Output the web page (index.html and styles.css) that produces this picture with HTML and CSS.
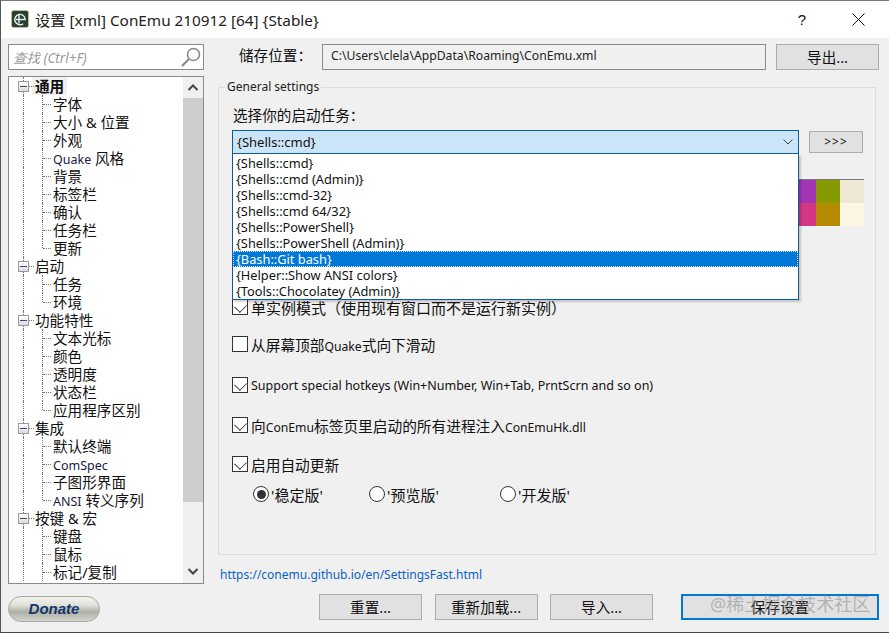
FILE: index.html
```html
<!DOCTYPE html>
<html lang="zh-CN">
<head>
<meta charset="utf-8">
<title>设置</title>
<link rel="stylesheet" href="styles.css">
</head>
<body>
<div class="window">
  <header class="titlebar">
    <svg class="app-icon" width="18" height="18" viewBox="0 0 18 18"><rect x="0.5" y="0.5" width="17" height="17" rx="2" fill="#26403a" stroke="#d8cc80" stroke-opacity=".7"/><path d="M5 9.5h9.2a5.2 5.2 0 1 0-2 4.2" fill="none" stroke="#e9efe4" stroke-width="1.4"/><path d="M8 4.5v9" fill="none" stroke="#e9efe4" stroke-width="1.4"/></svg>
    <span class="title-text">设置 [xml] ConEmu 210912 [64] {Stable}</span>
    <span class="help">?</span>
    <svg class="close" width="13" height="13" viewBox="0 0 13 13"><path d="M.5.5l12 12M12.5.5l-12 12" stroke="#111" stroke-width="1" fill="none"/></svg>
  </header>

  <div class="body">
    <aside class="left">
      <div class="search">
        <span class="search-text">查找 (Ctrl+F)</span>
        <svg width="22" height="22" viewBox="0 0 22 22"><circle cx="13.5" cy="8.5" r="6" fill="#fff" stroke="#8a8a8a" stroke-width="1.6"/><path d="M9 13l-7 7" stroke="#8a8a8a" stroke-width="2.2"/></svg>
      </div>
      <div class="tree">
        <ul class="tree-list">
          <li class="node parent"><i class="box"></i><b class="sel">通用</b></li>
          <li class="node child"><i class="tick"></i>字体</li>
          <li class="node child"><i class="tick"></i>大小 &amp; 位置</li>
          <li class="node child"><i class="tick"></i>外观</li>
          <li class="node child"><i class="tick"></i><span class="lat">Quake</span> 风格</li>
          <li class="node child"><i class="tick"></i>背景</li>
          <li class="node child"><i class="tick"></i>标签栏</li>
          <li class="node child"><i class="tick"></i>确认</li>
          <li class="node child"><i class="tick"></i>任务栏</li>
          <li class="node child last"><i class="tick"></i>更新</li>
          <li class="node parent"><i class="box"></i>启动</li>
          <li class="node child"><i class="tick"></i>任务</li>
          <li class="node child last"><i class="tick"></i>环境</li>
          <li class="node parent"><i class="box"></i>功能特性</li>
          <li class="node child"><i class="tick"></i>文本光标</li>
          <li class="node child"><i class="tick"></i>颜色</li>
          <li class="node child"><i class="tick"></i>透明度</li>
          <li class="node child"><i class="tick"></i>状态栏</li>
          <li class="node child last"><i class="tick"></i>应用程序区别</li>
          <li class="node parent"><i class="box"></i>集成</li>
          <li class="node child"><i class="tick"></i>默认终端</li>
          <li class="node child"><i class="tick"></i><span class="lat">ComSpec</span></li>
          <li class="node child"><i class="tick"></i>子图形界面</li>
          <li class="node child last"><i class="tick"></i><span class="lat">ANSI</span> 转义序列</li>
          <li class="node parent"><i class="box"></i>按键 &amp; 宏</li>
          <li class="node child"><i class="tick"></i>键盘</li>
          <li class="node child"><i class="tick"></i>鼠标</li>
          <li class="node child"><i class="tick"></i>标记/复制</li>
        </ul>
        <div class="scrollbar">
          <svg class="arrow" width="20" height="21" viewBox="0 0 20 21"><path d="M5.5 13l4.5-4.5 4.5 4.5" fill="none" stroke="#444" stroke-width="2"/></svg>
          <div class="thumb"></div>
          <svg class="arrow down" width="20" height="21" viewBox="0 0 20 21"><path d="M5.5 8l4.5 4.5 4.5-4.5" fill="none" stroke="#444" stroke-width="2"/></svg>
        </div>
      </div>
      <div class="donate">Donate</div>
    </aside>

    <main class="right">
      <div class="store-row">
        <span class="store-label">储存位置：</span>
        <div class="store-path">C:\Users\clela\AppData\Roaming\ConEmu.xml</div>
        <button class="btn export">导出...</button>
      </div>

      <section class="group">
        <span class="legend">General settings</span>
        <div class="pick-label">选择你的启动任务：</div>
        <div class="combo-row">
          <div class="combo">
            <span>{Shells::cmd}</span>
            <svg width="10" height="6" viewBox="0 0 10 6"><path d="M.5.5L5 5 9.5.5" fill="none" stroke="#444" stroke-width="1"/></svg>
          </div>
          <button class="btn more">&gt;&gt;&gt;</button>
          <ul class="dropdown">
            <li>{Shells::cmd}</li>
            <li>{Shells::cmd (Admin)}</li>
            <li>{Shells::cmd-32}</li>
            <li>{Shells::cmd 64/32}</li>
            <li>{Shells::PowerShell}</li>
            <li>{Shells::PowerShell (Admin)}</li>
            <li class="active">{Bash::Git bash}</li>
            <li>{Helper::Show ANSI colors}</li>
            <li>{Tools::Chocolatey (Admin)}</li>
          </ul>
        </div>
        <div class="palette">
          <i class="c1"></i><i class="c2"></i><i class="c3"></i>
          <i class="c4"></i><i class="c5"></i><i class="c6"></i>
        </div>

        <label class="check r1"><i class="cb on"></i><span>单实例模式（使用现有窗口而不是运行新实例）</span></label>
        <label class="check r2"><i class="cb"></i><span>从屏幕顶部<small>Quake</small>式向下滑动</span></label>
        <label class="check r3"><i class="cb on"></i><span class="en">Support special hotkeys (Win+Number, Win+Tab, PrntScrn and so on)</span></label>
        <label class="check r4"><i class="cb on"></i><span>向<small>ConEmu</small>标签页里启动的所有进程注入<small>ConEmuHk.dll</small></span></label>
        <label class="check r5"><i class="cb on"></i><span>启用自动更新</span></label>
        <div class="radios">
          <label class="radio w1"><i class="rb on"></i><span>'稳定版'</span></label>
          <label class="radio w2"><i class="rb"></i><span>'预览版'</span></label>
          <label class="radio"><i class="rb"></i><span>'开发版'</span></label>
        </div>
      </section>

      <a class="link">https://conemu.github.io/en/SettingsFast.html</a>

      <div class="actions">
        <button class="btn act">重置...</button>
        <button class="btn act">重新加载...</button>
        <button class="btn act">导入...</button>
        <button class="btn act primary">保存设置</button>
      </div>
    </main>
  </div>
  <span class="watermark">@稀土掘金技术社区</span>
</div>
</body>
</html>
```
FILE: styles.css
```css
* { box-sizing: border-box; }
html, body { margin: 0; padding: 0; }
body {
  width: 889px; height: 633px; overflow: hidden; background: #f0f0f0;
  font-family: "Noto Sans", "Noto Sans CJK SC", sans-serif; color: #111;
  text-spacing-trim: space-all; font-feature-settings: "chws" 0;
}
ul { list-style: none; margin: 0; padding: 0; }
i { display: block; font-style: normal; }
.window { position: relative; width: 889px; height: 633px; border-bottom: 1px solid #444; border-left: 1px solid #555; border-top: 1px solid #777; }

.titlebar { height: 37px; background: #fff; display: flex; align-items: center; padding-left: 10px; padding-right: 24px; padding-bottom: 1px; }
.app-icon { flex: none; }
.title-text { margin-left: 6px; font-size: 15.3px; white-space: nowrap; color: #222; flex: 1; }
.help { font-size: 15px; margin-right: 46px; font-family: "Liberation Sans", sans-serif; }
.close { margin-top: 1px; }

.body { display: flex; height: 594px; }
.left { width: 217px; flex: none; padding: 6px 0 0 7px; display: flex; flex-direction: column; }
.search { width: 196px; height: 26px; background: #fff; border: 1px solid #8a8a8a; display: flex; align-items: center; justify-content: space-between; padding: 0 1px 0 4px; }
.search-text { font-size: 13.5px; font-style: italic; color: #9a9a9a; }

.tree { width: 196px; height: 508px; margin-top: 6px; background: #fff; border: 1px solid #8a8a8a; display: flex; overflow: hidden; }
.tree-list { flex: 1; }
.node { height: 18px; line-height: 18px; font-size: 14.6px; white-space: nowrap; position: relative; }
.node::before { content: ""; position: absolute; left: 14px; top: 0; bottom: 0; border-left: 1px dotted #777; }
.parent { padding-left: 26px; }
.child { padding-left: 44px; }
.child::after { content: ""; position: absolute; left: 33px; top: 0; bottom: 0; border-left: 1px dotted #777; }
.child.last::after { bottom: 9px; }
.tick { position: absolute; left: 34px; top: 9px; width: 8px; border-top: 1px dotted #777; }
.box { position: absolute; left: 9px; top: 4px; width: 11px; height: 11px; border: 1px solid #9a9a9a; background: linear-gradient(#fff, #dcdcdc); z-index: 1; }
.box::after { content: ""; position: absolute; left: 1px; right: 1px; top: 4px; border-top: 1px solid #44447a; }
.parent::after { content: ""; position: absolute; left: 20px; width: 5px; top: 9px; border-top: 1px dotted #777; }
.sel { display: inline-block; background: #f0f0f0; padding: 0 3px; margin-left: -3px; font-weight: 700; }
.lat { font-size: 12.5px; color: #1a1a44; }

.scrollbar { width: 20px; flex: none; background: #f0f0f0; display: flex; flex-direction: column; }
.arrow { flex: none; }
.thumb { height: 404px; background: #cdcdcd; }
.arrow.down { margin-top: auto; margin-bottom: 1px; }

.donate {
  width: 92px; height: 26px; margin-top: 12px; border-radius: 13px; border: 1px solid #a9a9a2;
  background: linear-gradient(#f4f4ef 0%, #dedfd8 35%, #aeb0a8 62%, #d4d4cd 100%);
  text-align: center; font: italic 700 15px/24px "Liberation Sans", sans-serif; color: #12386b;
}

.right { flex: 1; padding-top: 6px; position: relative; }
.store-row { display: flex; align-items: center; height: 26px; }
.store-label { font-size: 14.6px; margin-left: 21px; width: 83px; white-space: nowrap; line-height: 23px; height: 24px; margin-top: -2px; }
.store-path { width: 444px; height: 26px; border: 1px solid #8a8a8a; background: #f0f0f0; font-size: 12.2px; line-height: 22px; padding-left: 8px; color: #222; }
.btn { background: #e1e1e1; border: 1px solid #adadad; font-family: inherit; font-size: 14.6px; color: #111; padding: 0 0 2px; }
.export { width: 103px; height: 26px; margin-left: 10px; }

.group { position: relative; width: 658px; height: 468px; margin-top: 17px; border: 1px solid #dcdcdc; padding: 0 0 0 13px; }
.legend { position: absolute; left: 6px; top: -9px; background: #f0f0f0; padding: 0 2px; font-size: 12px; line-height: 16px; color: #222; }
.pick-label { font-size: 14.6px; line-height: 20px; margin-top: 17px; margin-left: 1px; height: 21px; }
.combo-row { position: relative; display: flex; align-items: center; margin-top: 4px; }
.combo { width: 567px; height: 24px; background: #cce4f7; border: 1px solid #0a5f9a; display: flex; align-items: center; justify-content: space-between; padding: 0 5px 0 4px; font-size: 13px; }
.more { width: 54px; height: 22px; margin-left: 10px; font-size: 12px; letter-spacing: 1px; }
.dropdown { position: absolute; left: 0; top: 24px; width: 567px; height: 146px; padding-top: 1px; background: #fff; border: 1px solid #0a5f9a; border-top: 0; box-shadow: 2px 2px 2px rgba(0,0,0,.18); z-index: 5; font-size: 12.8px; }
.dropdown li { height: 16px; line-height: 16px; padding-left: 3px; white-space: nowrap; }
.dropdown li.active { background: #0078d7; color: #fff; outline: 1px dotted #cfe6fa; outline-offset: -1px; }

.palette { display: grid; grid-template-columns: 41px 24px 24px; grid-auto-rows: 23px; width: 89px; margin: 25px 0 0 543px; border-top: 1px solid #777; }
.palette i { width: 100%; height: 100%; }
.c1 { background: #a235b4; }
.c2 { background: #859900; }
.c3 { background: #eee8d5; }
.c4 { background: #d33682; }
.c5 { background: #b58900; }
.c6 { background: #fdf6e3; }

.check { display: flex; align-items: center; height: 20px; font-size: 14.7px; white-space: nowrap; }
.check small { font-size: 12.2px; }
.check .en { font-size: 12.5px; }
.r1 { margin-top: 71px; font-size: 15px; }
.r2 { margin-top: 17px; }
.r3 { margin-top: 21px; }
.r4 { margin-top: 20px; }
.r5 { margin-top: 19px; }
.cb { width: 16px; height: 16px; border: 1px solid #333; background: #fff; margin-right: 3px; flex: none; position: relative; }
.cb.on::after { content: ""; position: absolute; left: 3px; top: 1px; width: 8px; height: 10px; border: solid #333; border-width: 0 1.4px 1.4px 0; transform: rotate(45deg) scale(.9); }
.radios { display: flex; margin-top: 10px; margin-left: 21px; font-size: 15px; }
.radio { display: flex; align-items: center; white-space: nowrap; height: 20px; }
.w1 { width: 116px; }
.w2 { width: 131px; }
.rb { width: 16px; height: 16px; border: 1px solid #333; border-radius: 50%; background: #fff; margin-right: 2px; position: relative; }
.rb.on::after { content: ""; position: absolute; left: 2.5px; top: 2.5px; width: 9px; height: 9px; border-radius: 50%; background: #333; }

.link { display: block; margin: 11px 0 0 2px; font-size: 12px; line-height: 17px; color: #0b62c4; }
.actions { display: flex; margin-top: 11px; margin-left: 101px; }
.act { width: 103px; height: 26px; margin-right: 12.5px; }
.primary { width: 198px; margin-left: 15.5px; margin-right: 0; border: 2px solid #0078d7; }
.watermark { position: absolute; left: 709px; top: 591px; font-size: 18px; line-height: 24px; color: rgba(130,130,130,.5); white-space: nowrap; z-index: 9; }
```
